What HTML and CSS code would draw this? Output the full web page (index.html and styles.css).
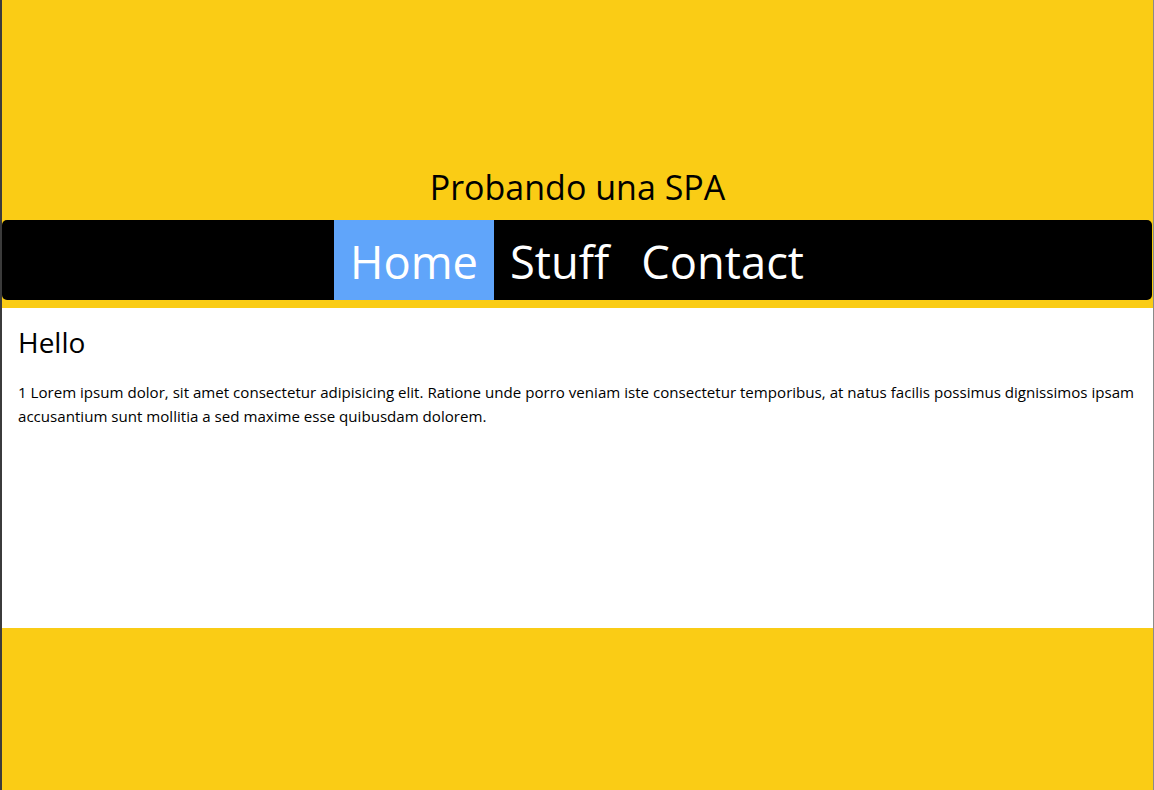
FILE: index.html
```html
<!DOCTYPE html>
<html lang="es">
<head>
<meta charset="utf-8">
<title>Probando una SPA</title>
<link rel="stylesheet" href="styles.css">
</head>
<body>
<header class="header">
  <h1 class="title">Probando una SPA</h1>
</header>
<nav class="nav">
  <a class="nav-link active" href="#">Home</a>
  <a class="nav-link" href="#">Stuff</a>
  <a class="nav-link" href="#">Contact</a>
</nav>
<main class="content">
  <h2 class="content-title">Hello</h2>
  <p class="content-text">1 Lorem ipsum dolor, sit amet consectetur adipisicing elit. Ratione unde porro veniam iste consectetur temporibus, at natus facilis possimus dignissimos ipsam accusantium sunt mollitia a sed maxime esse quibusdam dolorem.</p>
</main>
</body>
</html>
```
FILE: styles.css
```css
html, body {
  margin: 0;
  padding: 0;
}
body {
  background: #facc15;
  min-height: 790px;
  box-sizing: border-box;
  border-left: 2px solid #3b3b3b;
  border-right: 1px solid #8a8a8a;
  font-family: "Open Sans", "Noto Sans", sans-serif;
  color: #000;
}
.header {
  height: 220px;
  display: flex;
  align-items: flex-end;
  justify-content: center;
}
.title {
  margin: 0 0 11px;
  font-size: 34px;
  font-weight: 400;
  line-height: 44px;
}
.nav {
  height: 80px;
  background: #000;
  border-radius: 5px;
  display: flex;
  justify-content: center;
  margin-right: 1px;
}
.nav-link {
  display: flex;
  align-items: center;
  padding: 2px 16px 0;
  color: #fff;
  text-decoration: none;
  font-size: 45.3px;
}
.nav-link.active {
  background: #60a5fa;
}
.content {
  margin-top: 8px;
  height: 320px;
  box-sizing: border-box;
  background: #fff;
  padding: 14px 16px 16px;
}
.content-title {
  margin: 0 0 18px;
  font-size: 28px;
  font-weight: 400;
  line-height: 40px;
}
.content-text {
  margin: 0;
  font-size: 15.1px;
  line-height: 24px;
}
```
